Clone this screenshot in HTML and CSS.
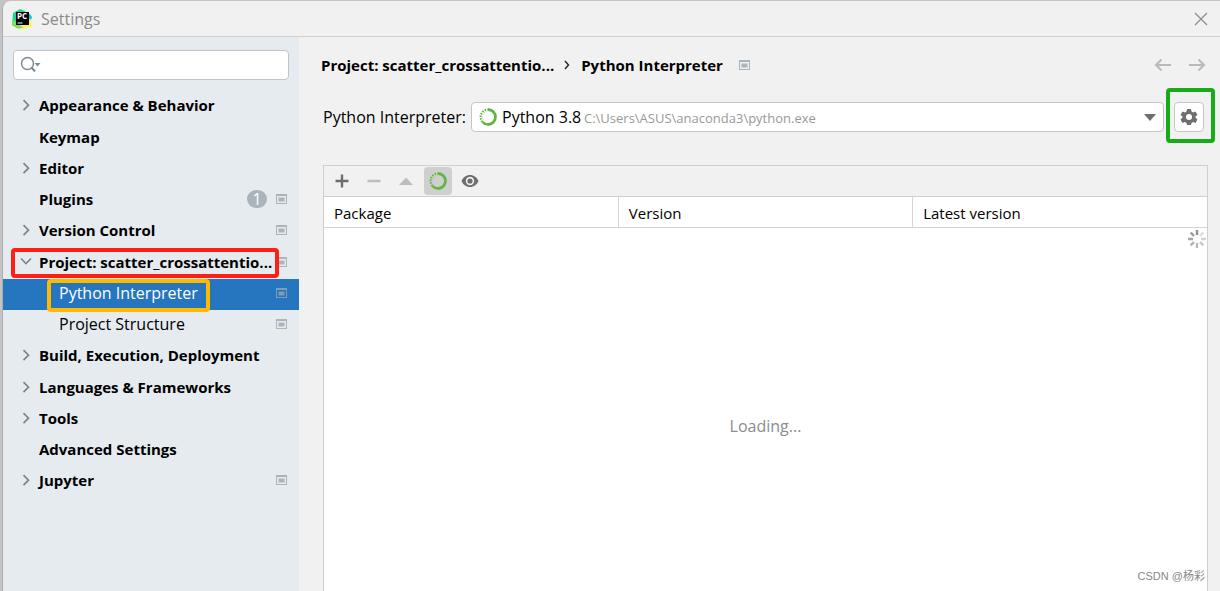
FILE: index.html
```html
<!DOCTYPE html>
<html lang="en">
<head>
<meta charset="utf-8">
<title>Settings</title>
<link rel="stylesheet" href="styles.css">
</head>
<body>
<svg class="defs" width="0" height="0" aria-hidden="true">
  <symbol id="chevron" viewBox="0 0 12 12"><path d="M3.500 1.200 8.500 6.200 3.500 11.200" fill="none" stroke="#7f8487" stroke-width="1.700"/></symbol>
  <symbol id="chevron-open" viewBox="0 0 12 12"><path d="M1 2.500 6 7.500 11 2.500" fill="none" stroke="#7f8487" stroke-width="1.700"/></symbol>
  <symbol id="scope" viewBox="0 0 11 10"><path d="M0 0h11v10H0zM1 2v7h9V2z" fill="currentColor" fill-rule="evenodd"/><path d="M2.500 3.500h6v4h-6z" fill="currentColor"/></symbol>
  <symbol id="progress" viewBox="0 0 18 18">
    <path d="M9 1.500a7.500 7.500 0 0 1 0 15" fill="none" stroke="#62b543" stroke-width="2.800"/>
    <path d="M9 16.500a7.500 7.500 0 0 1-5.500-2.500" fill="none" stroke="#62b543" stroke-width="2.600"/>
    <path d="M3.500 14a7.500 7.500 0 0 1 5.500-12.500" fill="none" stroke="#62b543" stroke-width="2" stroke-dasharray="1.500 1.200"/>
    <path d="M4.300 12a5.500 5.500 0 0 1 4-8.400" fill="none" stroke="#a9d598" stroke-width="1" stroke-dasharray="1 1.500"/>
  </symbol>
</svg>
<div class="window">
  <header class="titlebar">
    <svg class="logo" viewBox="0 0 20 20" aria-hidden="true">
      <path d="M1 4 8 0l5 2 3 5-4 11-7 1-5-3z" fill="#21d789"/>
      <path d="M14 3l4 2 2 3-1 3-4-1z" fill="#07c3f2"/>
      <path d="M15 8l4 3 1 6-6 2-3 1-4-2z" fill="#fcf84a"/>
      <path d="M0 15l2-4 6 6 4 1-5 2z" fill="#8be04e"/>
      <path d="M4 3h13v13H4z" fill="#000"/>
      <path d="M5.500 14h5" stroke="#fff" stroke-width="1.200"/>
      <text x="5" y="10" class="logo-text">PC</text>
    </svg>
    <h1 class="title">Settings</h1>
    <button class="close" aria-label="Close"><svg width="14" height="14" viewBox="0 0 14 14"><path d="M1 1 13 13M13 1 1 13" stroke="#8c8c8c" stroke-width="1.200"/></svg></button>
  </header>
  <div class="content">
    <aside class="sidebar">
      <div class="search">
        <svg class="search-icon" width="22" height="18" viewBox="0 0 22 18" aria-hidden="true"><circle cx="7.500" cy="7.500" r="6" fill="none" stroke="#7d8b96" stroke-width="1.500"/><path d="M11.500 11.500 15 15.500" stroke="#7d8b96" stroke-width="2"/><path d="M14.500 7h6l-3 3.500z" fill="#7d8b96"/></svg>
        <input class="search-input" type="text" aria-label="Search settings">
      </div>
      <nav class="tree" aria-label="Settings">
        <a class="row" href="#"><svg class="arrow"><use href="#chevron"/></svg><span class="label">Appearance &amp; Behavior</span></a>
        <a class="row spaced" href="#"><span class="arrow"></span><span class="label">Keymap</span></a>
        <a class="row" href="#"><svg class="arrow"><use href="#chevron"/></svg><span class="label">Editor</span></a>
        <a class="row" href="#"><span class="arrow"></span><span class="label">Plugins</span><span class="count">1</span><svg class="scope"><use href="#scope"/></svg></a>
        <a class="row" href="#"><svg class="arrow"><use href="#chevron"/></svg><span class="label">Version Control</span><svg class="scope"><use href="#scope"/></svg></a>
        <a class="row spaced" href="#"><svg class="arrow"><use href="#chevron-open"/></svg><span class="label">Project: scatter_crossattentio...</span><svg class="scope"><use href="#scope"/></svg><span class="mark mark-red"></span></a>
        <a class="row child selected" href="#"><span class="label">Python Interpreter</span><svg class="scope"><use href="#scope"/></svg><span class="mark mark-orange"></span></a>
        <a class="row child" href="#"><span class="label">Project Structure</span><svg class="scope"><use href="#scope"/></svg></a>
        <a class="row" href="#"><svg class="arrow"><use href="#chevron"/></svg><span class="label">Build, Execution, Deployment</span></a>
        <a class="row spaced" href="#"><svg class="arrow"><use href="#chevron"/></svg><span class="label">Languages &amp; Frameworks</span></a>
        <a class="row" href="#"><svg class="arrow"><use href="#chevron"/></svg><span class="label">Tools</span></a>
        <a class="row" href="#"><span class="arrow"></span><span class="label">Advanced Settings</span></a>
        <a class="row" href="#"><svg class="arrow"><use href="#chevron"/></svg><span class="label">Jupyter</span><svg class="scope"><use href="#scope"/></svg></a>
      </nav>
    </aside>
    <main class="main">
      <div class="crumbs">
        <span>Project: scatter_crossattentio...</span>
        <svg class="crumb-sep" width="6" height="10" viewBox="0 0 6 10" aria-hidden="true"><path d="M1 1 4.500 5 1 9" fill="none" stroke="#222" stroke-width="1.400"/></svg>
        <span>Python Interpreter</span>
        <svg class="scope crumb-scope"><use href="#scope"/></svg>
        <div class="history">
          <button class="plain" aria-label="Back"><svg width="18" height="14" viewBox="0 0 18 14"><path d="M17 7H2M7.500 1.500 2 7l5.500 5.500" fill="none" stroke="#b9b9b9" stroke-width="2"/></svg></button>
          <button class="plain" aria-label="Forward"><svg width="18" height="14" viewBox="0 0 18 14"><path d="M1 7h15M10.500 1.500 16 7l-5.500 5.500" fill="none" stroke="#b9b9b9" stroke-width="2"/></svg></button>
        </div>
      </div>
      <div class="interpreter">
        <label for="interpreter">Python Interpreter:</label>
        <div class="combo">
          <select id="interpreter" class="select"><option>Python 3.8</option></select>
          <svg class="combo-icon" width="18" height="18" aria-hidden="true"><use href="#progress"/></svg>
          <span class="path">C:\Users\ASUS\anaconda3\python.exe</span>
          <svg class="combo-arrow" width="12" height="7" viewBox="0 0 12 7" aria-hidden="true"><path d="M0 0h12L6 7z" fill="#6e6e6e"/></svg>
        </div>
        <div class="gear-wrap">
          <button class="gear" aria-label="Interpreter options"><svg width="18" height="18" viewBox="0 0 18 18"><path fill="#6e6e6e" fill-rule="evenodd" d="M7 1h4l.5 2.500 1.600.9 2.400-.8 2 3.400L15.600 8.200v1.600l1.900 1.700-2 3.400-2.400-.8-1.600.9L11 17H7l-.5-2-1.600-.9-2.400.8-2-3.400 1.900-1.700V8.200L.5 7l2-3.400 2.400.8 1.600-.9zM9 6a3 3 0 1 0 0 6 3 3 0 0 0 0-6z"/></svg></button>
          <span class="mark mark-green"></span>
        </div>
      </div>
      <section class="packages">
        <div class="toolbar">
          <button class="tool" aria-label="Add"><svg width="14" height="14" viewBox="0 0 14 14"><path d="M7 .5v13M.5 7h13" stroke="#6e6e6e" stroke-width="2.400"/></svg></button>
          <button class="tool" aria-label="Remove"><svg width="14" height="14" viewBox="0 0 14 14"><path d="M.5 7h13" stroke="#bdbdbd" stroke-width="2.400"/></svg></button>
          <button class="tool" aria-label="Upgrade"><svg width="14" height="14" viewBox="0 0 14 14"><path d="M0 11h14L7 3.500z" fill="#bdbdbd"/></svg></button>
          <button class="tool active" aria-label="Loading"><svg width="18" height="18"><use href="#progress"/></svg></button>
          <button class="tool" aria-label="Show early releases"><svg width="18" height="14" viewBox="0 0 18 14"><path fill="#6e6e6e" fill-rule="evenodd" d="M9 1c4 0 7 2.500 8.500 6C16 10.500 13 13 9 13S2 10.500.5 7C2 3.500 5 1 9 1zm0 1.800a4.200 4.200 0 1 0 0 8.400 4.200 4.200 0 0 0 0-8.400z"/><circle cx="9" cy="7" r="2.600" fill="#6e6e6e"/></svg></button>
        </div>
        <table class="table">
          <thead><tr><th>Package</th><th>Version</th><th>Latest version</th></tr></thead>
        </table>
        <div class="empty">
          <span>Loading...</span>
          <svg class="spinner" width="18" height="18" viewBox="0 0 18 18" aria-hidden="true" stroke-width="2.400">
            <path d="M9 0v5" stroke="#8b9299"/><path d="M2.700 2.700 6 6" stroke="#949ba2"/><path d="M0 9h5" stroke="#a0a6ac"/><path d="M2.700 15.300 6 12" stroke="#abb0b5"/><path d="M9 13v5" stroke="#b5babe"/><path d="M15.300 15.300 12 12" stroke="#c3c7ca"/><path d="M13 9h5" stroke="#cfd2d4"/><path d="M15.300 2.700 12 6" stroke="#dcdee0"/>
          </svg>
          <span class="credit">CSDN @杨彩</span>
        </div>
      </section>
    </main>
  </div>
</div>
</body>
</html>
```
FILE: styles.css
```css
* { box-sizing: border-box; }
body {
  margin: 0;
  padding: 1px 0 0 2px;
  min-height: 100vh;
  display: flex;
  background: #c4c4c4;
  color: #000;
  font: 16px/20px "Open Sans", "Noto Sans", sans-serif;
}
button { font: inherit; padding: 0; border: 0; background: none; }
button svg { display: block; }
.defs { position: absolute; }
.window {
  flex: 1;
  display: flex;
  flex-direction: column;
  border-left: 1px solid #adadad;
  border-top-left-radius: 8px;
  background: #f1f1f1;
  overflow: hidden;
}
.titlebar {
  display: flex;
  align-items: center;
  gap: 9px;
  height: 36px;
  padding: 0 12px 0 9px;
  border-bottom: 1px solid #cfcfcf;
}
.logo { width: 20px; height: 20px; }
.logo-text { font: bold 8px "Open Sans", sans-serif; fill: #fff; }
.title { margin: 0; font-size: 16px; font-weight: 400; color: #8b8b8b; }
.close { margin-left: auto; }
.content { flex: 1; display: flex; }
.sidebar { flex: none; width: 296px; background: #e5ebef; }
.search {
  display: flex;
  align-items: center;
  height: 30px;
  margin: 13px 10px 11px;
  padding-left: 6px;
  border: 1px solid #c2c4c5;
  border-radius: 4px;
  background: #fff;
}
.search-input { flex: 1; min-width: 0; border: 0; outline: 0; background: none; font: inherit; }
.row {
  position: relative;
  display: flex;
  align-items: center;
  height: 31px;
  padding: 0 12px 4px 17px;
  color: #000;
  font-size: 15px;
  font-weight: 700;
  text-decoration: none;
  white-space: nowrap;
}
.spaced { margin-top: 1px; }
.child { padding-left: 56px; font-size: 16px; font-weight: 400; }
.selected { background: #2675bf; color: #fff; }
.arrow { flex: none; width: 12px; height: 12px; margin-right: 7px; }
.label { flex: 1; }
.scope { flex: none; width: 11px; height: 10px; color: #a9b4bc; }
.selected .scope { color: #7f9db8; }
.count {
  width: 20px;
  height: 18px;
  margin-right: 9px;
  border-radius: 9px;
  background: #a9b4bc;
  color: #fff;
  font-size: 16px;
  font-weight: 400;
  line-height: 18px;
  text-align: center;
}
.mark { position: absolute; z-index: 1; border: 4px solid; border-radius: 4px; pointer-events: none; }
.mark-red { left: 8px; right: 20px; top: 0; bottom: 1px; border-color: #ff1e14; }
.mark-orange { left: 44px; right: 89px; top: 0; bottom: -2px; border-color: #ffb900; }
.mark-green { inset: -14px -11px -11px -8px; border-color: #18ab18; }
.main { flex: 1; min-width: 0; display: flex; flex-direction: column; padding: 18px 12px 0 24px; }
.crumbs { display: flex; align-items: center; margin-left: -2px; font-size: 15px; font-weight: 700; white-space: nowrap; }
.crumb-sep { margin: 0 11px 0 10px; }
.crumb-scope { margin-left: 16px; }
.history { display: flex; gap: 16px; margin-left: auto; padding-right: 2px; }
.interpreter { display: flex; align-items: center; margin-top: 27px; }
.combo { position: relative; flex: 1; display: flex; margin: 0 10px 0 5px; }
.select {
  flex: 1;
  height: 30px;
  padding: 0 30px 0 30px;
  appearance: none;
  border: 1px solid #c6c6c6;
  border-radius: 4px;
  background: #fff;
  color: #000;
  font: inherit;
}
.combo-icon { position: absolute; left: 8px; top: 6px; }
.path { position: absolute; left: 113px; top: 6px; color: #999; font-size: 13px; pointer-events: none; }
.combo-arrow { position: absolute; right: 8px; top: 12px; pointer-events: none; }
.gear-wrap { position: relative; margin-right: 4px; }
.gear {
  display: grid;
  place-items: center;
  width: 30px;
  height: 30px;
  border: 1px solid #c6c6c6;
  border-radius: 4px;
  background: #fff;
}
.packages {
  flex: 1;
  display: flex;
  flex-direction: column;
  margin-top: 33px;
  border: 1px solid #cfcfcf;
  border-bottom: 0;
}
.toolbar { display: flex; align-items: center; gap: 4px; height: 31px; padding-left: 4px; border-bottom: 1px solid #cfcfcf; }
.tool { display: grid; place-items: center; width: 28px; height: 28px; border-radius: 4px; }
.active { background: #cfcfcf; }
.table { width: 100%; table-layout: fixed; border-collapse: collapse; background: #fff; }
.table th {
  height: 30px;
  padding: 2px 9px 0 10px;
  border-bottom: 1px solid #d4d4d4;
  font-size: 15px;
  font-weight: 400;
  text-align: left;
}
.table th + th { border-left: 1px solid #d4d4d4; }
.empty { position: relative; flex: 1; display: grid; place-items: center; padding-top: 34px; background: #fff; color: #8c8c8c; }
.spinner { position: absolute; top: 2px; right: 1px; }
.credit {
  position: absolute;
  right: 2px;
  bottom: 6px;
  color: #888;
  font: 11px/18px "Liberation Sans", "Noto Sans CJK SC", sans-serif;
}
```
